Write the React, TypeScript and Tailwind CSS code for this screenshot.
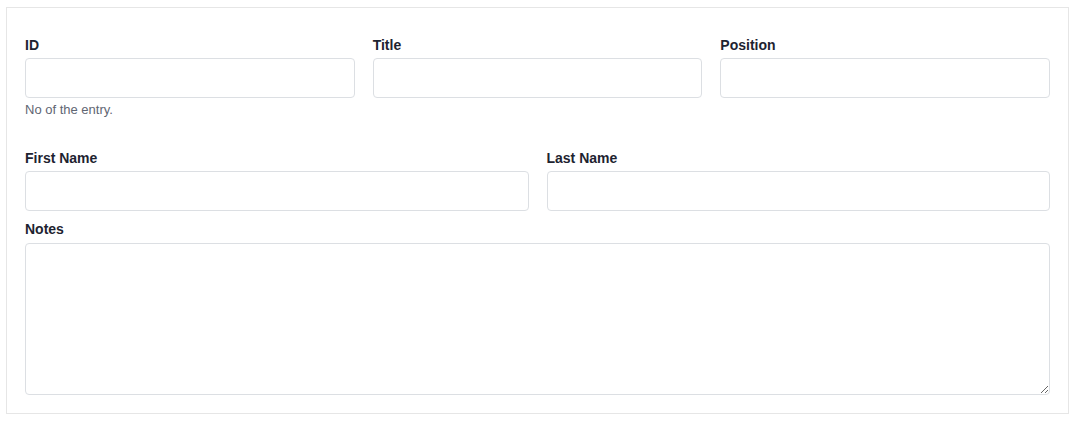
import React from "react";

const labelCls =
  "block text-[14px] leading-[20px] font-bold text-[#1e2330] mb-[3px]";
const inputCls =
  "block w-full h-[40px] rounded-[4px] border border-[#dcdfe3] bg-white px-3 text-[14px] outline-none";

function Field({ label, help }: { label: string; help?: string }) {
  return (
    <div className="min-w-0">
      <label className={labelCls}>{label}</label>
      <input type="text" className={inputCls} />
      {help && (
        <div className="mt-[2px] text-[13px] leading-[20px] text-[#5f6673]">{help}</div>
      )}
    </div>
  );
}

export default function App() {
  return (
    <div
      className="bg-white min-h-[422px] pt-[7px]"
      style={{ fontFamily: '"Liberation Sans", Arial, sans-serif' }}
    >
      <div className="ml-[6px] mr-[8px] border border-[#e6e6e6] px-[18px] pt-[27px] pb-[18px]">
        {/* Row 1 */}
        <div className="grid grid-cols-3 gap-x-[18px]">
          <Field label="ID" help="No of the entry." />
          <Field label="Title" />
          <Field label="Position" />
        </div>

        {/* Row 2 */}
        <div className="mt-[28px] grid grid-cols-2 gap-x-[18px]">
          <Field label="First Name" />
          <Field label="Last Name" />
        </div>

        {/* Notes */}
        <div className="mt-[8px]">
          <label className="block text-[14px] leading-[20px] font-bold text-[#1e2330] mb-[4px]">
            Notes
          </label>
          <textarea className="block w-full h-[152px] rounded-[4px] border border-[#dcdfe3] bg-white px-3 py-2 text-[14px] outline-none resize-y" />
        </div>
      </div>
    </div>
  );
}
